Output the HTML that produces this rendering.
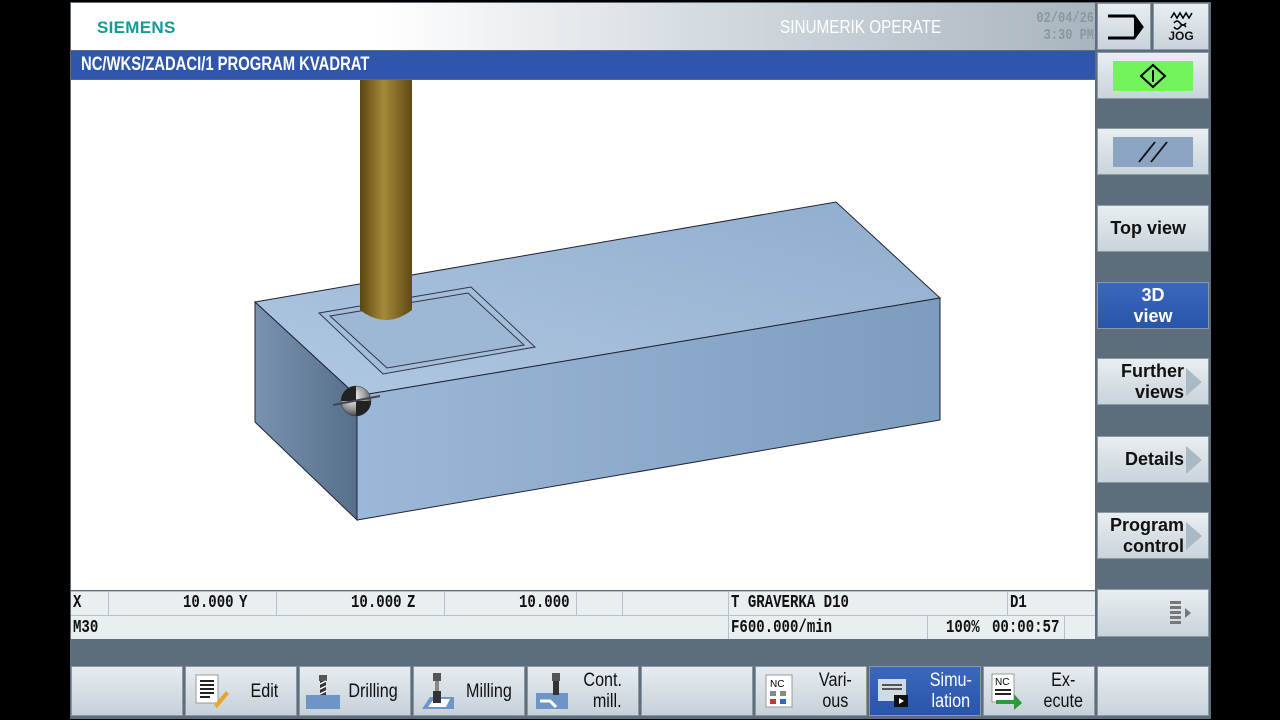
<!DOCTYPE html>
<html><head><meta charset="utf-8"><style>
*{margin:0;padding:0;box-sizing:border-box}
body{width:1280px;height:720px;background:#000;position:relative;overflow:hidden;font-family:"Liberation Sans",sans-serif}
.a{position:absolute}
.frame{left:70px;top:2px;width:1141px;height:717px;background:#5d6d7b}
.hdr{left:71px;top:3px;width:1024px;height:47px;background:linear-gradient(90deg,#fff 0%,#fff 30%,#d6dde2 60%,#a9b5be 100%)}
.btn{position:absolute;background:linear-gradient(#e9eef1,#c9d3da);border:1px solid #8a98a3;color:#111;font-family:"Liberation Sans Narrow","Liberation Sans",sans-serif;font-weight:bold;font-size:18px;text-align:right;display:flex;align-items:center;justify-content:flex-end;padding-right:24px;line-height:21px}
.sel{background:linear-gradient(#3a68bd,#2a55a8);color:#fff}
.tri{position:absolute;right:6px;top:50%;margin-top:-14px;width:0;height:0;border-top:14px solid transparent;border-bottom:14px solid transparent;border-left:16px solid #a9b9c6}
.cell{position:absolute;font-family:"Liberation Mono",monospace;font-weight:bold;font-size:18px;color:#111;transform:scaleX(.78);transform-origin:left}
.bk{position:absolute;top:666px;height:50px;width:112px;background:linear-gradient(#e6ecf0,#c6d1d9);border:1px solid #8a98a3;font-family:"Liberation Sans Narrow","Liberation Sans",sans-serif;font-size:19px;color:#111;text-align:center;line-height:21px;display:flex;align-items:center}
.bk span{display:inline-block;transform:scaleX(.85)}
</style></head><body>
<div class="a frame"></div>
<div class="a hdr"></div>
<div class="a" style="left:97px;top:18px;color:#139a96;font-weight:bold;font-size:17px;letter-spacing:.3px">SIEMENS</div>
<div class="a" style="left:780px;top:17px;color:#fff;font-size:18px;transform:scaleX(.85);transform-origin:left">SINUMERIK OPERATE</div>
<div class="a" style="left:1020px;top:10px;width:74px;text-align:right;color:#8c969e;font-family:'Liberation Mono',monospace;font-weight:bold;font-size:15px;line-height:17px;transform:scaleX(.8);transform-origin:right">02/04/26<br>3:30 PM</div>
<div class="a" style="left:71px;top:51px;width:1024px;height:28px;background:#2f56aa"></div>
<div class="a" style="left:81px;top:51px;color:#fff;font-size:19px;line-height:28px;font-weight:bold;transform:scaleX(.78);transform-origin:left;white-space:nowrap">NC/WKS/ZADACI/1 PROGRAM KVADRAT</div>
<div class="a" style="left:71px;top:80px;width:1024px;height:510px;background:#fff"></div>
<svg class="a" style="left:0;top:0" width="1280" height="720">
<defs>
<linearGradient id="tp" x1="0" y1="1" x2="1" y2="0"><stop offset="0" stop-color="#b0c8e2"/><stop offset="1" stop-color="#8fadcd"/></linearGradient>
<linearGradient id="fr" x1="0" y1="0" x2="1" y2="0"><stop offset="0" stop-color="#9cb8d8"/><stop offset="1" stop-color="#7d9cbe"/></linearGradient>
<linearGradient id="lf" x1="0" y1="0" x2="1" y2="0"><stop offset="0" stop-color="#7893b0"/><stop offset="1" stop-color="#566f8b"/></linearGradient>
<linearGradient id="tl" x1="0" y1="0" x2="1" y2="0"><stop offset="0" stop-color="#5a4510"/><stop offset=".45" stop-color="#a58a38"/><stop offset="1" stop-color="#5e4a14"/></linearGradient>
<radialGradient id="sp" cx=".4" cy=".35" r=".7"><stop offset="0" stop-color="#fff"/><stop offset=".6" stop-color="#999"/><stop offset="1" stop-color="#333"/></radialGradient>
</defs>
<polygon points="255,302 836,202 940,298 357,396" fill="url(#tp)" stroke="#223" stroke-width="1"/>
<polygon points="357,396 940,298 940,420 357,520" fill="url(#fr)" stroke="#223" stroke-width="1"/>
<polygon points="255,302 357,396 357,520 255,422" fill="url(#lf)" stroke="#223" stroke-width="1"/>
<polygon points="319,313 471,287 535,347 383,374" fill="#a3bed9" stroke="#334" stroke-width="1"/>
<polygon points="330,316 468,293 524,345 387,368" fill="#9db8d5" stroke="#334" stroke-width="1"/>
<path d="M360,80 V310 Q386,330 412,310 V80 Z" fill="url(#tl)"/>
<circle cx="356" cy="401" r="15" fill="url(#sp)" stroke="#333" stroke-width=".5"/>
<path d="M356,386 A15,15 0 0 0 341,401 H356 Z M356,401 H371 A15,15 0 0 1 356,416 Z" fill="#222"/>
<line x1="333" y1="405" x2="380" y2="396" stroke="#445" stroke-width="2"/>
</svg>
<div class="a" style="left:71px;top:591px;width:1024px;height:48px;background:#e9eef1"></div>
<div class="a" style="left:71px;top:615px;width:1024px;height:1px;background:#b7c2ca"></div>
<div class="a" style="left:71px;top:591px;width:1024px;height:1px;background:#b7c2ca"></div>
<div class="a" style="left:108px;top:591px;width:1px;height:24px;background:#b7c2ca"></div>
<div class="a" style="left:276px;top:591px;width:1px;height:24px;background:#b7c2ca"></div>
<div class="a" style="left:444px;top:591px;width:1px;height:24px;background:#b7c2ca"></div>
<div class="a" style="left:576px;top:591px;width:1px;height:24px;background:#b7c2ca"></div>
<div class="a" style="left:622px;top:591px;width:1px;height:24px;background:#b7c2ca"></div>
<div class="a" style="left:728px;top:591px;width:1px;height:48px;background:#b7c2ca"></div>
<div class="a" style="left:1007px;top:591px;width:1px;height:24px;background:#b7c2ca"></div>
<div class="a" style="left:927px;top:616px;width:1px;height:23px;background:#b7c2ca"></div>
<div class="a" style="left:1064px;top:616px;width:1px;height:23px;background:#b7c2ca"></div>
<div class="cell" style="left:73px;top:593px">X</div>
<div class="cell" style="left:183px;top:593px">10.000</div>
<div class="cell" style="left:239px;top:593px">Y</div>
<div class="cell" style="left:351px;top:593px">10.000</div>
<div class="cell" style="left:407px;top:593px">Z</div>
<div class="cell" style="left:519px;top:593px">10.000</div>
<div class="cell" style="left:731px;top:593px">T GRAVERKA D10</div>
<div class="cell" style="left:1010px;top:593px">D1</div>
<div class="cell" style="left:73px;top:618px">M30</div>
<div class="cell" style="left:731px;top:618px">F600.000/min</div>
<div class="cell" style="left:946px;top:618px">100%</div>
<div class="cell" style="left:992px;top:618px">00:00:57</div>
<div class="btn" style="left:1097px;top:3px;width:54px;height:47px;padding:0;justify-content:center"><svg width="40" height="34"><path d="M4,6 H30 L38,17 L30,28 H4" fill="none" stroke="#000" stroke-width="3"/><path d="M30,6 L38,17 L30,28 Z" fill="#000"/></svg></div>
<div class="btn" style="left:1153px;top:3px;width:56px;height:47px;padding:0;justify-content:center;flex-direction:column;font-size:12px;line-height:13px"><svg width="26" height="20"><path d="M3,8 l3,-5 3,5 3,-5 3,5 3,-5 3,5 3,-5 M6,13 q3,-4 6,0 t6,0 M6,17 q3,4 6,0 t6,0" fill="none" stroke="#000" stroke-width="1.5"/></svg>JOG</div>
<div class="btn" style="left:1097px;top:52px;width:112px;height:47px;padding:0;justify-content:center"><div style="width:80px;height:30px;background:#73f35e;display:flex;align-items:center;justify-content:center"><svg width="30" height="26"><path d="M15,2 L27,13 L15,24 L3,13 Z M15,7 V19" fill="none" stroke="#000" stroke-width="2"/></svg></div></div>
<div class="btn" style="left:1097px;top:128px;width:112px;height:47px;padding:0;justify-content:center"><div style="width:80px;height:30px;background:#8aa4c1;display:flex;align-items:center;justify-content:center"><svg width="40" height="26"><path d="M6,23 L22,3 M18,23 L34,3" stroke="#111" stroke-width="1.8"/></svg></div></div>
<div class="btn" style="left:1097px;top:205px;width:112px;height:47px;padding-right:22px">Top view</div>
<div class="btn sel" style="left:1097px;top:282px;width:112px;height:47px;justify-content:center;padding:0;text-align:center;flex-direction:column">3D<br>view</div>
<div class="btn" style="left:1097px;top:358px;width:112px;height:47px">Further<br>views<div class="tri"></div></div>
<div class="btn" style="left:1097px;top:436px;width:112px;height:47px">Details<div class="tri"></div></div>
<div class="btn" style="left:1097px;top:512px;width:112px;height:47px">Program<br>control<div class="tri"></div></div>
<div class="btn" style="left:1097px;top:589px;width:112px;height:48px;padding-right:16px"><svg width="22" height="28"><g fill="#777"><rect x="0" y="2" width="11" height="3"/><rect x="0" y="7" width="11" height="3"/><rect x="0" y="12" width="11" height="3"/><rect x="0" y="17" width="11" height="3"/><rect x="0" y="22" width="11" height="3"/><path d="M15,9 L21,14 L15,19 Z"/></g></svg></div>
<div class="btn" style="left:1097px;top:666px;width:112px;height:50px"></div>
<div class="bk" style="left:71px"></div>
<div class="bk" style="left:185px"><svg width="40" height="36" style="margin-left:6px"><rect x="4" y="2" width="22" height="28" fill="#fff" stroke="#999"/><path d="M8,8 h14 M8,12 h14 M8,16 h14 M8,20 h14 M8,24 h10" stroke="#222" stroke-width="2"/><path d="M22,32 L34,18 L37,21 L25,35 Z" fill="#e8a530"/></svg><span style="margin-left:16px">Edit</span></div>
<div class="bk" style="left:299px"><svg width="40" height="40" style="margin-left:4px"><rect x="2" y="24" width="34" height="14" fill="#6e95c8"/><rect x="15" y="4" width="8" height="6" fill="#555"/><rect x="16" y="10" width="6" height="14" fill="#333"/><path d="M16,13 l6,-3 M16,18 l6,-3 M16,23 l6,-3" stroke="#fff" stroke-width="1.5"/></svg><span style="margin-left:0px">Drilling</span></div>
<div class="bk" style="left:413px"><svg width="40" height="40" style="margin-left:4px"><path d="M4,38 L12,26 H36 V38 Z" fill="#6e95c8"/><path d="M10,36 L16,28 H32 L28,36 Z" fill="#fff"/><rect x="15" y="2" width="8" height="8" fill="#555"/><rect x="17" y="10" width="4" height="10" fill="#888"/><rect x="15" y="20" width="8" height="12" fill="#333"/></svg><span style="margin-left:4px">Milling</span></div>
<div class="bk" style="left:527px"><svg width="40" height="40" style="margin-left:4px"><rect x="4" y="22" width="32" height="16" fill="#6e95c8"/><path d="M8,30 h10 l6,6" stroke="#fff" stroke-width="3" fill="none"/><rect x="20" y="2" width="8" height="8" fill="#555"/><rect x="21" y="10" width="6" height="14" fill="#333"/></svg><span style="margin-left:8px">Cont.<br>&nbsp;&nbsp;mill.</span></div>
<div class="bk" style="left:641px"></div>
<div class="bk" style="left:755px"><svg width="30" height="36" style="margin-left:8px"><rect x="2" y="2" width="26" height="32" fill="#fff" stroke="#999"/><text x="6" y="14" font-size="10" font-family="Liberation Sans">NC</text><rect x="6" y="18" width="6" height="5" fill="#888"/><rect x="16" y="18" width="6" height="5" fill="#888"/><rect x="6" y="26" width="6" height="5" fill="#c33"/><rect x="16" y="26" width="6" height="5" fill="#36c"/></svg><span style="margin-left:22px">Vari-<br>ous</span></div>
<div class="bk" style="left:869px;background:linear-gradient(#3a68bd,#2a55a8);color:#fff"><svg width="36" height="36" style="margin-left:6px"><rect x="2" y="6" width="28" height="22" fill="#d0dbe6"/><path d="M6,12 h20 M6,16 h20" stroke="#555" stroke-width="2"/><rect x="18" y="22" width="14" height="12" fill="#111"/><path d="M23,25 l5,3 -5,3 Z" fill="#fff"/></svg><span style="margin-left:14px">Simu-<br>lation</span></div>
<div class="bk" style="left:983px"><svg width="34" height="38" style="margin-left:6px"><rect x="2" y="2" width="22" height="28" fill="#fff" stroke="#999"/><text x="5" y="13" font-size="10" font-family="Liberation Sans">NC</text><path d="M5,18 h16 M5,22 h16" stroke="#222" stroke-width="2"/><path d="M6,28 h18 v-6 l8,9 -8,7 v-6 h-18 Z" fill="#2a9a3a"/></svg><span style="margin-left:16px">Ex-<br>ecute</span></div>
</body></html>
